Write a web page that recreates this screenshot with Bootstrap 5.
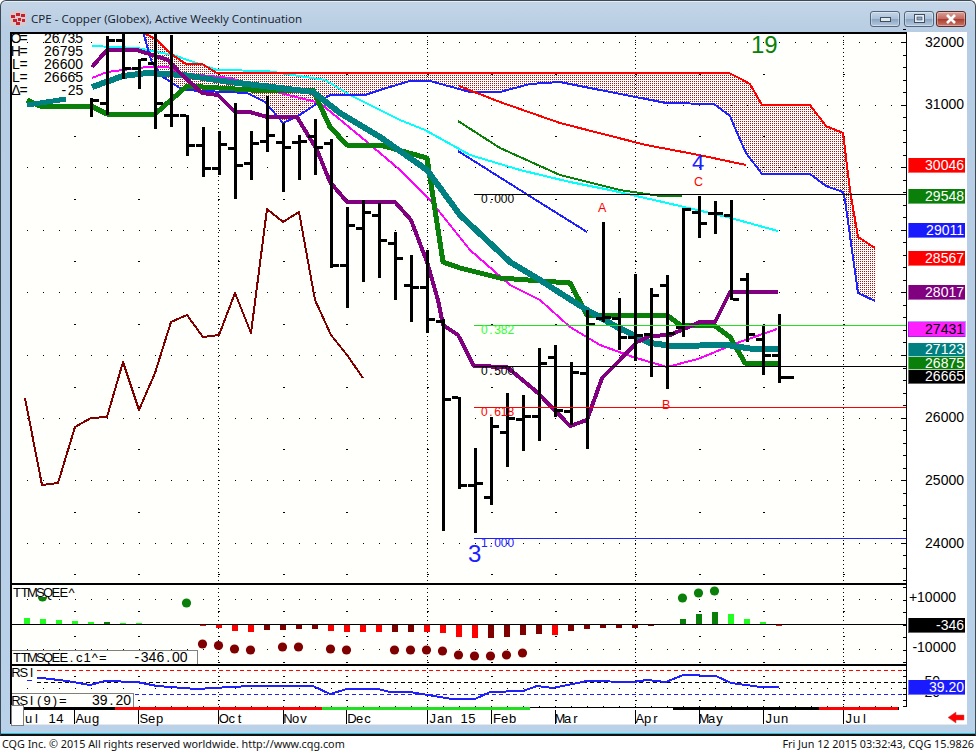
<!DOCTYPE html>
<html lang="en">
<head>
<meta charset="utf-8">
<title>CPE - Copper (Globex)</title>
<link href="https://cdn.jsdelivr.net/npm/bootstrap@5.3.0/dist/css/bootstrap.min.css" rel="stylesheet">
<style>
html,body{width:976px;height:752px;overflow:hidden;background:#fff}
.win{height:736px;background:linear-gradient(180deg,#c4d5e7 0,#b7cde3 32px,#b9d1e9 100%);border:1px solid #3c4a55;border-bottom:2px solid #111;border-radius:6px 6px 0 0;box-shadow:inset 0 -1px 0 #2fc0d6,inset 0 1px 0 #e6edf5}
.titlebar{height:31px;padding:4px 9px 0 9px;flex:none}
.titlebar .ttl{font:11.6px "Open Sans",sans-serif;color:#14202c;margin-left:5px;white-space:nowrap}
.wbtn{width:30px;height:16px;padding:0;border:1px solid #51667c;border-radius:3px;background:linear-gradient(180deg,#c7d6e6 0,#a9c0d8 48%,#8aa5c2 52%,#b5c9dd 100%);display:flex;align-items:center;justify-content:center;box-shadow:inset 0 0 0 1px rgba(255,255,255,.35)}
.wbtn.x{margin-left:2px;background:linear-gradient(180deg,#d9a198 0,#c36a5e 48%,#a93c30 52%,#c9776a 100%);border-color:#5b2c28}
.chart{display:block;margin-left:9px;width:957px;height:693px;flex:none;background:#fff;overflow:visible}
.status{height:16px;font:10.8px "Noto Sans",sans-serif;color:#111;padding:0 2px;line-height:16px;white-space:nowrap}
svg text{font-family:"Liberation Sans",Arial,sans-serif;font-size:14px;white-space:pre;fill:#000}
svg text.lab{font-size:13px}
svg text.fib{font-size:12px}
svg text.wv{fill:#fff;text-anchor:end}
svg text.ax{text-anchor:end}
svg text.big{font-size:24px}
svg text.abc{font-size:12.5px;fill:#f00}
.ln{fill:none;shape-rendering:crispEdges;stroke-linejoin:round}
</style>
</head>
<body>
<div class="win d-flex flex-column overflow-hidden">
  <header class="titlebar d-flex align-items-center">
    <svg width="16" height="15" viewBox="0 0 16 15" aria-hidden="true"><rect width="16" height="15" rx="1" fill="#d8c9cc"/><path d="M1 4h4v3H1zM6 2h4v3H6zM11 3h4v3h-4zM3 8h4v3H3zM8 7h3v3H8zM12 8h3v3h-3zM6 11h4v3H6z" fill="#c8202c"/></svg>
    <span class="ttl">CPE - Copper (Globex), Active Weekly Continuation</span>
    <div class="ms-auto d-flex">
      <button class="btn wbtn me-1" type="button" aria-label="Minimize"><svg width="11" height="6" viewBox="0 0 11 6"><rect x=".5" y="1.5" width="10" height="4" fill="#dfe7ef" stroke="#3f4f60"/></svg></button>
      <button class="btn wbtn" type="button" aria-label="Maximize"><svg width="11" height="9" viewBox="0 0 11 9"><rect x=".5" y=".5" width="10" height="8" fill="#e6edf4" stroke="#3f4f60"/><rect x="3" y="3" width="5" height="3" fill="#8ea6bf" stroke="#3f4f60" stroke-width=".6"/></svg></button>
      <button class="btn wbtn x" type="button" aria-label="Close"><svg width="12" height="10" viewBox="0 0 12 10"><path d="M2 1l8 8M10 1l-8 8" stroke="#fff" stroke-width="2.6"/></svg></button>
    </div>
  </header>
  <svg class="chart" viewBox="10 32 957 693" xmlns="http://www.w3.org/2000/svg">
    <defs>
      <clipPath id="cm"><rect x="11" y="33" width="895" height="549"/></clipPath>
      <clipPath id="cc"><rect x="10" y="584" width="896" height="81"/></clipPath>
      <pattern id="dots" width="2" height="2" patternUnits="userSpaceOnUse" patternTransform="translate(0 1)"><rect width="1" height="1" fill="#b01010" shape-rendering="crispEdges"/></pattern>
    </defs>
    <rect x="10" y="32" width="896" height="675" fill="#fffffb"/>
    <g id="grid" shape-rendering="crispEdges"></g>
    <g id="main" clip-path="url(#cm)"></g>
    <g clip-path="url(#cm)">
      <path d="M474 194.500H907" stroke="#000" shape-rendering="crispEdges"/>
      <path d="M474 325.500H907" stroke="#20e020" shape-rendering="crispEdges"/>
      <path d="M474 366.500H907" stroke="#000" shape-rendering="crispEdges"/>
      <path d="M474 407.500H907" stroke="#f00" shape-rendering="crispEdges"/>
      <path d="M474 538.500H907" stroke="#2020ff" shape-rendering="crispEdges"/>
      <text class="fx fib" data-p="6.6" x="481" y="203">0.000</text>
      <text class="fx fib" data-p="6.6" x="481" y="334" style="fill:#30ff30">0.382</text>
      <text class="fx fib" data-p="6.6" x="481" y="375">0.500</text>
      <text class="fx fib" data-p="6.6" x="481" y="416" style="fill:#f00">0.618</text>
      <text class="fx fib" data-p="6.6" x="481" y="547" style="fill:#2020ff">1.000</text>
      <text class="big" x="751" y="53" style="fill:#0a800a">19</text>
      <text class="big" x="468" y="562" style="fill:#2020ff">3</text>
      <text class="big" x="692" y="170" style="fill:#2020ff;font-size:22px">4</text>
      <text class="big" x="795" y="599" style="fill:#2020ff">5</text>
      <text class="abc" x="598" y="212">A</text>
      <text class="abc" x="662" y="409">B</text>
      <text class="abc" x="694" y="186">C</text>
    </g>
    <g>
      <text class="fx" x="12" y="43">O=</text><text class="ax" x="83" y="43">26735</text>
      <text class="fx" x="12" y="56">H=</text><text class="ax" x="83" y="56">26795</text>
      <text class="fx" x="12" y="69">L=</text><text class="ax" x="83" y="69">26600</text>
      <text class="fx" x="12" y="82">L=</text><text class="ax" x="83" y="82">26665</text>
      <text class="fx" x="12" y="95">Δ=</text><text class="fx" x="60" y="95">-25</text>
    </g>
    <!-- lower panes -->
    <g id="low" clip-path="url(#cc)"></g>
    <g id="rsi"></g>
    <rect x="12" y="585" width="64" height="12" fill="#fffffb"/>
    <text class="fx lab" x="13" y="597">TTMSQEE^</text>
    <rect x="11" y="650" width="186" height="14" fill="#fffffb" stroke="#808080" shape-rendering="crispEdges"/>
    <text class="fx lab" x="13" y="662">TTMSQEE.c1^=</text><text class="fx" x="133" y="662">-346.00</text>
    <text class="fx lab" x="12" y="677">RSI</text>
    <rect x="11" y="693" width="122" height="14" fill="#fffffb" stroke="#808080" shape-rendering="crispEdges"/>
    <text class="fx lab" x="12" y="705">RSI(9)=</text><text class="fx" x="92" y="705">39.20</text>
    <g id="frame" shape-rendering="crispEdges"></g>
    <!-- time axis -->
    <g>
      <text class="fx lab" x="17" y="723">Jul 14</text>
      <text class="fx lab" x="76" y="723">Aug</text>
      <text class="fx lab" x="140" y="723">Sep</text>
      <text class="fx lab" x="220" y="723">Oct</text>
      <text class="fx lab" x="284" y="723">Nov</text>
      <text class="fx lab" x="348" y="723">Dec</text>
      <text class="fx lab" x="429" y="723">Jan 15</text>
      <text class="fx lab" x="493" y="723">Feb</text>
      <text class="fx lab" x="556" y="723">Mar</text>
      <text class="fx lab" x="636" y="723">Apr</text>
      <text class="fx lab" x="700" y="723">May</text>
      <text class="fx lab" x="765" y="723">Jun</text>
      <text class="fx lab" x="845" y="723">Jul</text>
    </g>
    <rect x="11" y="705" width="12" height="20" fill="#fff" stroke="#808080" shape-rendering="crispEdges"/>
    <path d="M948 717.500l8-5.500v3h8v5h-8v3z" fill="#f00" stroke="#c05050" stroke-width=".5"/>
    <!-- price axis -->
    <g>
      <text class="ax" x="964" y="47">32000</text>
      <text class="ax" x="964" y="109">31000</text>
      <text class="ax" x="964" y="422">26000</text>
      <text class="ax" x="964" y="485">25000</text>
      <text class="ax" x="964" y="548">24000</text>
      <text class="ax" x="956" y="602">+10000</text>
      <text class="ax" x="956" y="652">-10000</text>
      <text class="ax" x="940" y="686">50</text>
      <text class="ax" x="940" y="697">20</text>
    </g>
    <g shape-rendering="crispEdges" stroke-opacity=".4" stroke="#fff">
      <rect x="908" y="157.500" width="57" height="15" fill="#f00"/>
      <rect x="908" y="188.500" width="57" height="15" fill="#0a800a"/>
      <rect x="908" y="222.500" width="57" height="15" fill="#1a1aff"/>
      <rect x="908" y="250.500" width="57" height="15" fill="#f00"/>
      <rect x="908" y="284.500" width="57" height="15" fill="#800080"/>
      <rect x="908" y="321.500" width="57" height="15" fill="#ff20ff" stroke="#2020ff"/>
      <rect x="908" y="342.500" width="57" height="14" fill="#008080"/>
      <rect x="908" y="356.500" width="57" height="13" fill="#0a800a"/>
      <rect x="908" y="369.500" width="57" height="14" fill="#000"/>
      <rect x="908" y="617.500" width="57" height="15" fill="#000"/>
      <rect x="908" y="679.500" width="57" height="15" fill="#1a1aff"/>
    </g>
    <text class="wv" x="964" y="170">30046</text>
    <text class="wv" x="964" y="201">29548</text>
    <text class="wv" x="964" y="235">29011</text>
    <text class="wv" x="964" y="263">28567</text>
    <text class="wv" x="964" y="297">28017</text>
    <text class="wv" x="964" y="334" style="fill:#000">27431</text>
    <text class="wv" x="964" y="354">27123</text>
    <text class="wv" x="964" y="368">26875</text>
    <text class="wv" x="964" y="381">26665</text>
    <text class="wv" x="964" y="630">-346</text>
    <text class="wv" x="964" y="692">39.20</text>
  </svg>
</div>
<footer class="status d-flex justify-content-between">
  <span>CQG Inc. © 2015 All rights reserved worldwide. http://www.cqg.com</span>
  <span>Fri Jun 12 2015 03:32:43, CQG 15.9826</span>
</footer>
<script src="https://cdn.jsdelivr.net/npm/bootstrap@5.3.0/dist/js/bootstrap.bundle.min.js"></script>
<script>
const NS='http://www.w3.org/2000/svg';
const $=id=>document.getElementById(id);
function el(p,tag,a){const e=document.createElementNS(NS,tag);for(const k in a)e.setAttribute(k,a[k]);p.appendChild(e);return e}
function line(p,pts,color,w,extra){return el(p,'polyline',Object.assign({class:'ln',points:pts.map(q=>q.join(',')).join(' '),stroke:color,'stroke-width':w},extra||{}))}

/* ---- grid ---- */
const grid=$('grid');
const X=i=>26.67+16*i;
let d='';
const monthX=[74,138,218,283,346,427,491,555,635,699,763,843];
for(let k=0;k<9;k++){const y=Math.round(42+62.6*k);for(let i=0;i<55;i++)d+=`M${Math.round(X(i))} ${y}h1v1h-1z`;}
for(let k=0;k<9;k++){const y=Math.round(73.5+62.6*k);for(const x of monthX)d+=`M${x} ${y}h2v1h-2z`;}
for(const y of [599,649]){for(let i=0;i<55;i++)d+=`M${Math.round(X(i))} ${y}h1v1h-1z`;}
for(const y of [611,636,662]){for(const x of monthX)d+=`M${x} ${y}h2v1h-2z`;}
for(const y of [688,706]){for(let i=0;i<55;i++)d+=`M${Math.round(X(i))} ${y}h1v1h-1z`;}
for(const y of [676,700]){for(const x of monthX)d+=`M${x} ${y}h2v1h-2z`;}
el(grid,'path',{d,fill:'#000'});
for(const x of [218,427,635,843])el(grid,'path',{d:`M${x}.5 32V707`,stroke:'#000','stroke-dasharray':'1 3'});

/* ---- main pane lines ---- */
const m=$('main');
const red=[[143,32],[157,40],[170,53],[186,64],[202,64],[217,73],[729,73],[741,79],[750,84],[762,105],[810,105],[826,126],[843,133],[850,190],[858,237],[875,248]];
const blue=[[143,32],[152,63],[163,77],[183,90],[247,93],[265,102],[283,123],[298,116],[330,95],[365,95],[380,90],[410,81],[430,81],[470,92],[500,92],[530,84],[560,82],[600,90],[646,99],[666,103],[714,104],[730,116],[738,135],[746,153],[762,174],[810,174],[826,186],[843,192],[845,200],[858,293],[875,301]];
el(m,'polygon',{points:red.concat(blue.slice().reverse()).map(q=>q.join(',')).join(' '),fill:'url(#dots)'});
line(m,[[92,46],[137,48],[173,55],[217,70],[267,71],[325,80],[350,95],[400,120],[425,130],[470,155],[520,170],[570,182],[610,190],[667,203],[727,217],[778,231]],'#00ffff',2);
line(m,red,'#ff0000',2);
line(m,blue,'#2020ff',2);
line(m,[[459,86],[500,102],[560,123],[646,145],[699,155],[746,165]],'#ff0000',2);
line(m,[[458,121],[500,148],[560,175],[620,190],[660,196],[682,196]],'#0a800a',2);
line(m,[[458,151],[520,190],[587,232]],'#2020ff',2);
line(m,[[92,78],[107,72],[147,67],[168,67],[180,73],[230,78],[280,93],[320,103],[367,142],[400,170],[430,200],[470,250],[510,285],[540,300],[560,318],[570,327],[600,345],[633,357],[667,367],[698,359],[737,343],[777,329]],'#ff00ff',2);
line(m,[[25,398],[42,485],[58,483],[75,427],[91,418],[107,417],[123,362],[139,410],[155,373],[171,322],[187,315],[203,337],[219,335],[235,293],[251,333],[267,209],[283,222],[299,212],[315,300],[331,335],[347,355],[363,378]],'#800000',2);
line(m,[[27,100],[40,106],[91,106],[107,114],[155,114],[171,100],[187,86],[267,91],[313,90],[330,127],[347,145],[380,145],[427,158],[443,262],[460,268],[500,278],[570,283],[587,315],[667,315],[680,325],[715,326],[730,337],[745,363],[780,363]],'#0a800a',5);
line(m,[[27,105],[66,99]],'#008080',5);
line(m,[[92,87],[123,76],[147,73],[183,75],[230,82],[313,92],[340,113],[380,137],[427,170],[460,215],[510,262],[540,280],[560,293],[587,310],[617,327],[650,343],[673,346],[727,345],[753,349],[780,349]],'#008080',6);
line(m,[[92,67],[107,50],[137,50],[168,60],[180,73],[202,93],[218,95],[235,112],[250,112],[267,117],[297,117],[317,150],[330,182],[347,202],[395,202],[411,220],[427,262],[438,300],[443,325],[458,335],[474,366],[507,367],[538,393],[570,426],[587,420],[602,378],[618,362],[637,342],[650,336],[670,335],[700,322],[715,322],[730,292],[778,292]],'#800080',4);

/* ---- OHLC bars: [high, low, open, close] ---- */
const bars=[[98,117,0,100],[36,115,103,40],[32,79,40,68],[59,89,68,59],[33,129,63,103],[35,127,115,115],[115,156,115,145],[127,177,145,168],[131,175,168,144],[103,199,148,165],[131,180,163,143],[96,152,141,135],[123,192,142,147],[135,180,142,141],[119,175,136,147],[139,268,143,265],[207,308,265,225],[200,282,228,212],[203,278,215,240],[232,300,243,258],[255,322,285,287],[250,333,287,319],[319,531,321,399],[397,489,397,485],[448,533,485,483],[417,505,497,426],[393,467,432,418],[395,451,419,416],[348,441,416,363],[345,417,357,410],[362,425,411,372],[310,449,373,324],[222,322,318,317],[298,350,318,337],[274,361,337,335],[288,377,334,295],[275,389,285,333],[208,337,327,209],[196,238,212,223],[201,234,213,213],[200,300,215,299],[273,342,279,334],[326,375,339,355],[314,383,355,377]];
let bp='';
bars.forEach((b,i)=>{const x=90.67+16*i,r=Math.round(x-1);
  bp+=`M${r} ${b[0]}h3v${b[1]-b[0]}h-3z`;
  if(b[2])bp+=`M${r-6} ${b[2]-1}h6v3h-6z`;
  const tick=i==bars.length-1?14:7;
  bp+=`M${r+3} ${b[3]-1}h${tick-1}v3h-${tick-1}z`;});
el(m,'path',{d:bp,fill:'#000','shape-rendering':'crispEdges'});

/* ---- squeeze pane ---- */
const low=$('low');
const hist=[[1,6],[1,5],[1,4],[1,3.5],[1,2.5],[2,2],[1,1.5],[1,1.5],[3,-1],[3,-.5],[2,.5],[3,-1.5],[3,-4],[3,-7],[3,-8],[4,-5.5],[4,-5.5],[4,-4.5],[4,-4.5],[3,-7],[3,-8],[3,-8],[3,-8],[4,-8],[4,-8],[3,-8],[3,-8.5],[3,-13],[3,-14],[4,-14],[4,-13],[4,-11],[4,-10],[3,-11],[4,-7],[4,-4.5],[4,-4],[4,-4],[4,-4],[4,-2],[4,-1],[2,5],[2,10],[2,12],[1,10],[1,5],[1,2.5],[3,-1.5]];
const cols=['','#20ff20','#0a800a','#ff0000','#800000'];
hist.forEach((h,i)=>{const x=Math.round(X(i)-3),v=h[1];
  el(low,'rect',{x,width:6,y:v>0?624-v:624,height:Math.abs(v),fill:cols[h[0]],'shape-rendering':'crispEdges'});});
const dotsD=[[42,597,2],[186,603,2],[682,598,2],[698,593,2],[714,591,2],[202,644,4],[218,645.500,4],[234,649,4],[250,650,4],[282,647,4],[298,647,4],[330,649,4],[346,650,4],[394,650,4],[410,650,4],[426,650,4],[442,651,4],[458,655,4],[474,656,4],[490,656,4],[506,655,4],[522,653,4]];
dotsD.forEach(c=>el(low,'circle',{cx:c[0]+.5,cy:c[1],r:4.6,fill:cols[c[2]]}));

/* ---- RSI pane ---- */
const rsi=$('rsi');
[[670,'#f00'],[682,'#000'],[694,'#2020ff']].forEach(r=>el(rsi,'path',{d:`M37 ${r[0]}.5H906`,stroke:r[1],'stroke-dasharray':'4 3','shape-rendering':'crispEdges'}));
line(rsi,[[27,680],[32,680]],'#2020ff',1);
line(rsi,[[37,678],[42,678],[67,681],[90,685],[105,681],[137,682],[157,686],[197,689],[213,688],[250,686],[313,686],[330,694],[347,689],[378,689],[390,692],[410,692],[440,697],[452,699],[475,699],[490,692],[523,691],[537,686],[553,688],[587,681],[633,682],[647,680],[666,682],[683,675],[716,676],[731,683],[761,687],[779,687]],'#2020ff',2);

/* ---- frame, ticks, time strip ---- */
const f=$('frame');
const R=(x,y,w,h,c)=>el(f,'rect',{x,y,width:w,height:h,fill:c});
R(10,32,897,2,'#000');R(10,32,2,693,'#000');R(906,32,1,675,'#000');
R(10,582.500,897,2,'#000');R(10,664,897,2,'#000');R(10,624,896,1,'#000');
R(10,707,889,3,'#000');R(115,707,207,3,'#f00');R(322,707,208,3,'#20e020');R(530,707,143,3,'#fff');R(530,707,143,1,'#000');R(819,707,79,3,'#f00');
R(10,724,957,1,'#e8e8e8');
for(const x of monthX)R(x,710,1,14,'#000');
for(let k=-1;k<44;k++){const y=Math.round(42+12.52*k);if(y>582)break;const maj=k>=0&&k%5==0;R(maj?901:903,y,maj?5:3,1,'#000');}
for(let y=587;y<664;y+=12.5){const r=Math.round(y),maj=(r==599||r==649);R(maj?901:903,r,maj?5:3,1,'#000');}
for(let y=670;y<708;y+=6){R(903,y,3,1,'#000');}

/* ---- fixed-pitch labels: keep the string as one text, place each glyph in its cell ---- */
const ctx=document.createElement('canvas').getContext('2d');
document.querySelectorAll('text.fx').forEach(t=>{
  const s=t.textContent,cs=getComputedStyle(t),p=+(t.dataset.p||7.8),x0=+t.getAttribute('x');
  ctx.font=cs.fontSize+' "Liberation Sans"';
  const xs=[...s].map((c,i)=>(x0+i*p+(p-ctx.measureText(c).width)/2).toFixed(1));
  t.setAttribute('x',xs.join(' '));
});
</script>
</body>
</html>
